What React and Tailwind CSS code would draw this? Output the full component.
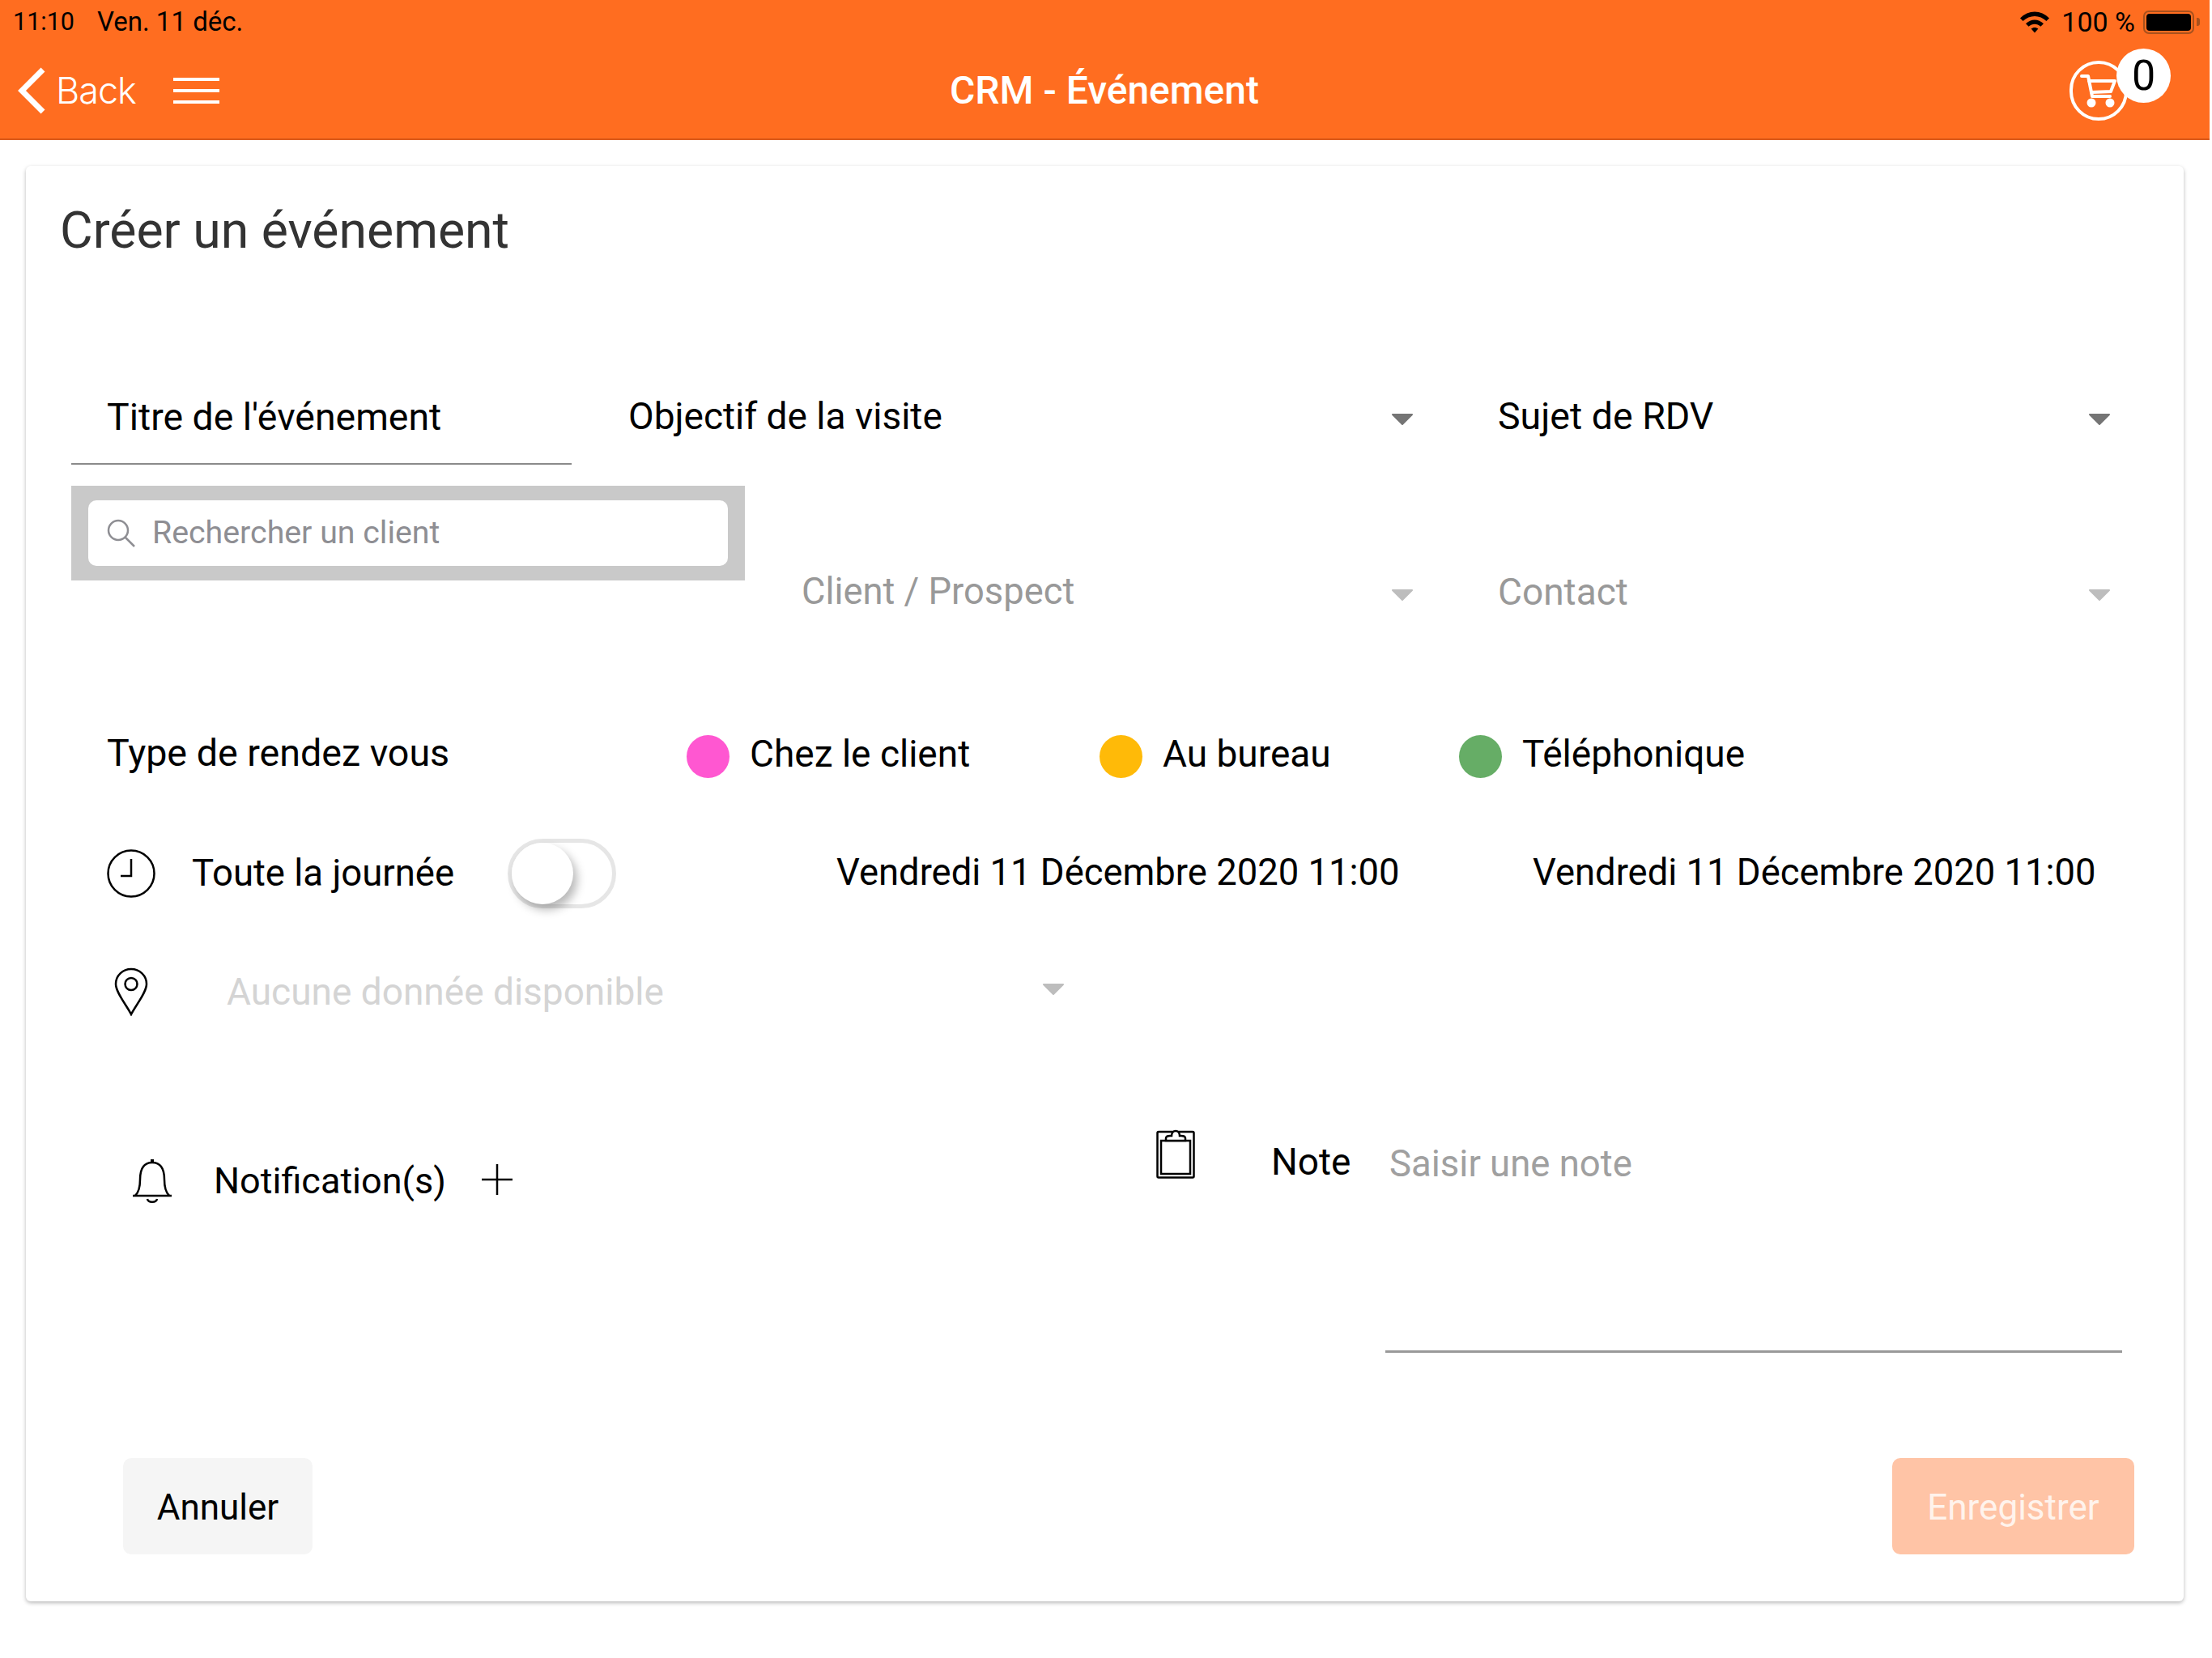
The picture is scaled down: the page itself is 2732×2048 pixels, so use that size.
import React from 'react';

const Caret = ({ color = '#757575', offset = 'mt-[8px]' }) => (
  <svg width="28" height="16" viewBox="0 0 28 16" className={`shrink-0 ${offset}`}>
    <path d="M2 2h24L14 14z" fill={color} stroke={color} strokeWidth="2" strokeLinejoin="round" />
  </svg>
);

const SelectField = ({ label, className, textClass, caret, caretOffset }) => (
  <div className={`flex items-center justify-between ${className}`}>
    <span className={textClass}>{label}</span>
    <Caret color={caret} offset={caretOffset} />
  </div>
);

const RdvType = ({ color, label, className }) => (
  <div className={`flex items-center ${className}`}>
    <div className={`w-[53px] h-[53px] rounded-full ${color}`}></div>
    <span className="ml-[25px] -mt-[6px]">{label}</span>
  </div>
);

const StatusBar = () => (
  <div className="h-[54px] flex items-center justify-between pl-[16px] pr-[12px] text-black text-[32px]">
    <div className="flex items-center">
      <span className="text-[30.5px]">11:10</span>
      <span className="ml-[28px] text-[33px]">Ven. 11 déc.</span>
    </div>
    <div className="flex items-center">
      <svg width="38" height="28" viewBox="0 0 38 28">
        <path d="M1 9.5C11 -1.2 27 -1.2 37 9.5l-3.6 3.6C25.4 4.9 12.6 4.9 4.6 13.1z" fill="#000" />
        <path d="M8 16.2c6.4-6.3 15.6-6.3 22 0l-3.6 3.6c-4.4-4.2-10.4-4.2-14.8 0z" fill="#000" />
        <path d="M14.6 22.6c2.6-2.1 6.2-2.1 8.8 0L19 27.5z" fill="#000" />
      </svg>
      <span className="ml-[14px] text-[34px]">100 %</span>
      <div className="ml-[10px] w-[63px] h-[29px] rounded-[7px] border-[2px] border-[#a8511d] p-[2px]">
        <div className="w-full h-full rounded-[4px] bg-black"></div>
      </div>
      <div className="ml-[3px] w-[4px] h-[10px] rounded-r-[3px] bg-[#a8511d]"></div>
    </div>
  </div>
);

const CartButton = () => (
  <div className="flex items-start w-[125px] mr-[26px] -mt-[15px]">
    <div className="w-[72px] h-[74px] mt-[15px] rounded-full border-[4px] border-white flex items-center justify-center shrink-0">
      <svg width="46" height="42" viewBox="0 0 46 42" fill="none" stroke="#fff" strokeWidth="4" strokeLinecap="round" strokeLinejoin="round">
        <path d="M2 3h8l5 25h22" />
        <path d="M11 9h32l-5 13-24 1" />
        <circle cx="14" cy="36" r="3.5" fill="#fff" />
        <circle cx="37" cy="36" r="3.5" fill="#fff" />
      </svg>
    </div>
    <div className="w-[67px] h-[67px] -ml-[14px] rounded-full bg-white flex items-center justify-center text-black text-[52px]">0</div>
  </div>
);

const Header = () => (
  <header className="w-[2729px] h-[173px] bg-[#ff6d20] border-b-[2px] border-[#d9591a] flex flex-col">
    <StatusBar />
    <div className="grid grid-cols-[1fr_auto_1fr] items-center h-[116px] pl-[21px] pr-[22px] text-white">
      <div className="flex items-center">
        <svg width="36" height="58" viewBox="0 0 36 58" fill="none" stroke="#fff" strokeWidth="7">
          <path d="M32 3L6 29l26 26" />
        </svg>
        <span className="ml-[12px] text-[45px] font-light font-['Inter',sans-serif] tracking-[-1px]">Back</span>
        <div className="ml-[46px] w-[57px] flex flex-col gap-[10px]">
          <div className="h-[4px] bg-white"></div>
          <div className="h-[4px] bg-white"></div>
          <div className="h-[4px] bg-white"></div>
        </div>
      </div>
      <div className="text-[48px] font-medium">CRM - Événement</div>
      <div className="flex justify-end">
        <CartButton />
      </div>
    </div>
  </header>
);

const App = () => {
  return (
    <div className="w-[2732px] h-[2048px] bg-white overflow-hidden font-['Roboto',sans-serif] text-[46px] text-black">
      <Header />

      <section className="ml-[32px] mt-[32px] w-[2665px] h-[1773px] bg-white rounded-[6px] shadow-[0_2px_5px_rgba(0,0,0,0.28)] flex flex-col">
        <div className="h-[249px] pl-[42px] pt-[44px]">
          <h1 className="text-[62.5px] leading-[72px] text-[#333333]">Créer un événement</h1>
        </div>

        {/* Titre, objectif, sujet */}
        <div className="flex h-[120px] pl-[56px]">
          <div className="w-[618px] pl-[44px] pt-[6px] border-b-[2px] border-[#8a8a8a] flex items-center text-[46.4px]">Titre de l'événement</div>
          <SelectField label="Objectif de la visite" className="ml-[70px] w-[970px]" />
          <SelectField label="Sujet de RDV" className="ml-[104px] w-[757px]" textClass="text-[46.5px] mt-[2px]" />
        </div>

        {/* Recherche client */}
        <div className="flex mt-[26px] pl-[56px]">
          <div className="w-[832px] h-[117px] bg-[#c9c9c9] px-[21px] py-[18px]">
            <div className="h-[81px] bg-white rounded-[10px] flex items-center pl-[23px] text-[39.3px] text-[#8e8e93]">
              <svg width="36" height="36" viewBox="0 0 36 36" fill="none" stroke="#8e8e93" strokeWidth="2.5">
                <circle cx="14" cy="14" r="12" />
                <path d="M22.5 22.5L34 34" />
              </svg>
              <span className="ml-[20px]">Rechercher un client</span>
            </div>
          </div>
          <SelectField label="Client / Prospect" className="ml-[70px] w-[756px] mt-[86px] h-[90px]" textClass="text-[#999999] text-[45.3px]" caret="#bdbdbd" />
          <SelectField label="Contact" className="ml-[104px] w-[757px] mt-[86px] h-[90px]" textClass="text-[#999999]" caret="#bdbdbd" />
        </div>

        {/* Type de rendez vous */}
        <div className="flex items-center h-[80px] mt-[118px] pl-[100px]">
          <span className="w-[716px] -mt-[6px] text-[46.6px]">Type de rendez vous</span>
          <RdvType color="bg-[#ff57d1]" label="Chez le client" className="w-[510px]" />
          <RdvType color="bg-[#ffba08]" label="Au bureau" className="w-[444px]" />
          <RdvType color="bg-[#66ad66]" label="Téléphonique" />
        </div>

        {/* Toute la journée + dates */}
        <div className="flex items-center h-[86px] mt-[62px] pl-[100px]">
          <svg width="60" height="60" viewBox="0 0 60 60" fill="none" stroke="#000" strokeWidth="2.5" className="shrink-0">
            <circle cx="30" cy="30" r="28.5" />
            <path d="M30 12v21H17" />
          </svg>
          <span className="ml-[45px] w-[390px] text-[45.5px]">Toute la journée</span>
          <div className="w-[134px] h-[86px] rounded-full border-[5px] border-[#e6e6e6] flex items-center shrink-0">
            <div className="w-[76px] h-[76px] rounded-full bg-white shadow-[5px_7px_12px_rgba(0,0,0,0.28)]"></div>
          </div>
          <span className="ml-[272px] w-[860px] -mt-[2px] text-[45.4px]">Vendredi 11 Décembre 2020 11:00</span>
          <span className="-mt-[2px] text-[45.4px]">Vendredi 11 Décembre 2020 11:00</span>
        </div>

        {/* Lieu */}
        <div className="flex items-center h-[90px] mt-[58px] pl-[109px]">
          <svg width="42" height="60" viewBox="0 0 42 60" fill="none" stroke="#000" strokeWidth="2.5" className="shrink-0">
            <path d="M21 58C15 46 2 31 2 20.5 2 10 10.5 2 21 2s19 8 19 18.5C40 31 27 46 21 58z" />
            <circle cx="21" cy="20.5" r="7.5" />
          </svg>
          <SelectField label="Aucune donnée disponible" className="ml-[97px] w-[1035px]" textClass="text-[#d4d4d4]" caret="#bdbdbd" caretOffset="-mt-[6px]" />
        </div>

        {/* Notifications et note */}
        <div className="flex h-[291px] mt-[110px]">
          <div className="w-[1396px] pl-[131px] pt-[45px]">
            <div className="flex items-center">
              <svg width="50" height="56" viewBox="0 0 50 56" fill="none" stroke="#000" strokeWidth="2.5" className="shrink-0">
                <path d="M1 46h48" />
                <path d="M4 46c5-5 6-11 6-20 0-8 1-21 15-21s15 13 15 21c0 9 1 15 6 20" />
                <path d="M25 1v4" strokeWidth="4" />
                <path d="M19 50c1 5 11 5 12 0" />
              </svg>
              <span className="ml-[51px] text-[45px]">Notification(s)</span>
              <svg width="38" height="38" viewBox="0 0 38 38" stroke="#000" strokeWidth="2.5" className="ml-[44px] -mt-[4px]">
                <path d="M19 0v38M0 19h38" />
              </svg>
            </div>
          </div>
          <div className="flex">
            <svg width="48" height="62" viewBox="0 0 48 62" fill="none" stroke="#000" strokeWidth="2.5" className="mt-[14px] shrink-0">
              <rect x="1.5" y="4" width="45" height="56.5" rx="1.5" />
              <rect x="6" y="15" width="36" height="41" />
              <path d="M12 15v-3c0-2 1-3 5-3h2c0-8 10-8 10 0h2c4 0 5 1 5 3v3z" fill="#fff" />
            </svg>
            <span className="ml-[94px] w-[141px] mt-[27px] leading-[56px]">Note</span>
            <div className="w-[910px] border-b-[3px] border-[#999999] pl-[5px] pt-[30px] leading-[56px] text-[#a0a0a0] text-[45.5px]">Saisir une note</div>
          </div>
        </div>

        {/* Actions */}
        <div className="flex justify-between mt-[130px] pl-[120px] pr-[61px] text-[44px]">
          <button className="w-[234px] h-[119px] pt-[2px] rounded-[10px] bg-[#f5f5f5] text-black">Annuler</button>
          <button className="w-[299px] h-[119px] pt-[2px] rounded-[10px] bg-[#ffc4a6] text-[#fff3ec]">Enregistrer</button>
        </div>
      </section>
    </div>
  );
};

export default App;
